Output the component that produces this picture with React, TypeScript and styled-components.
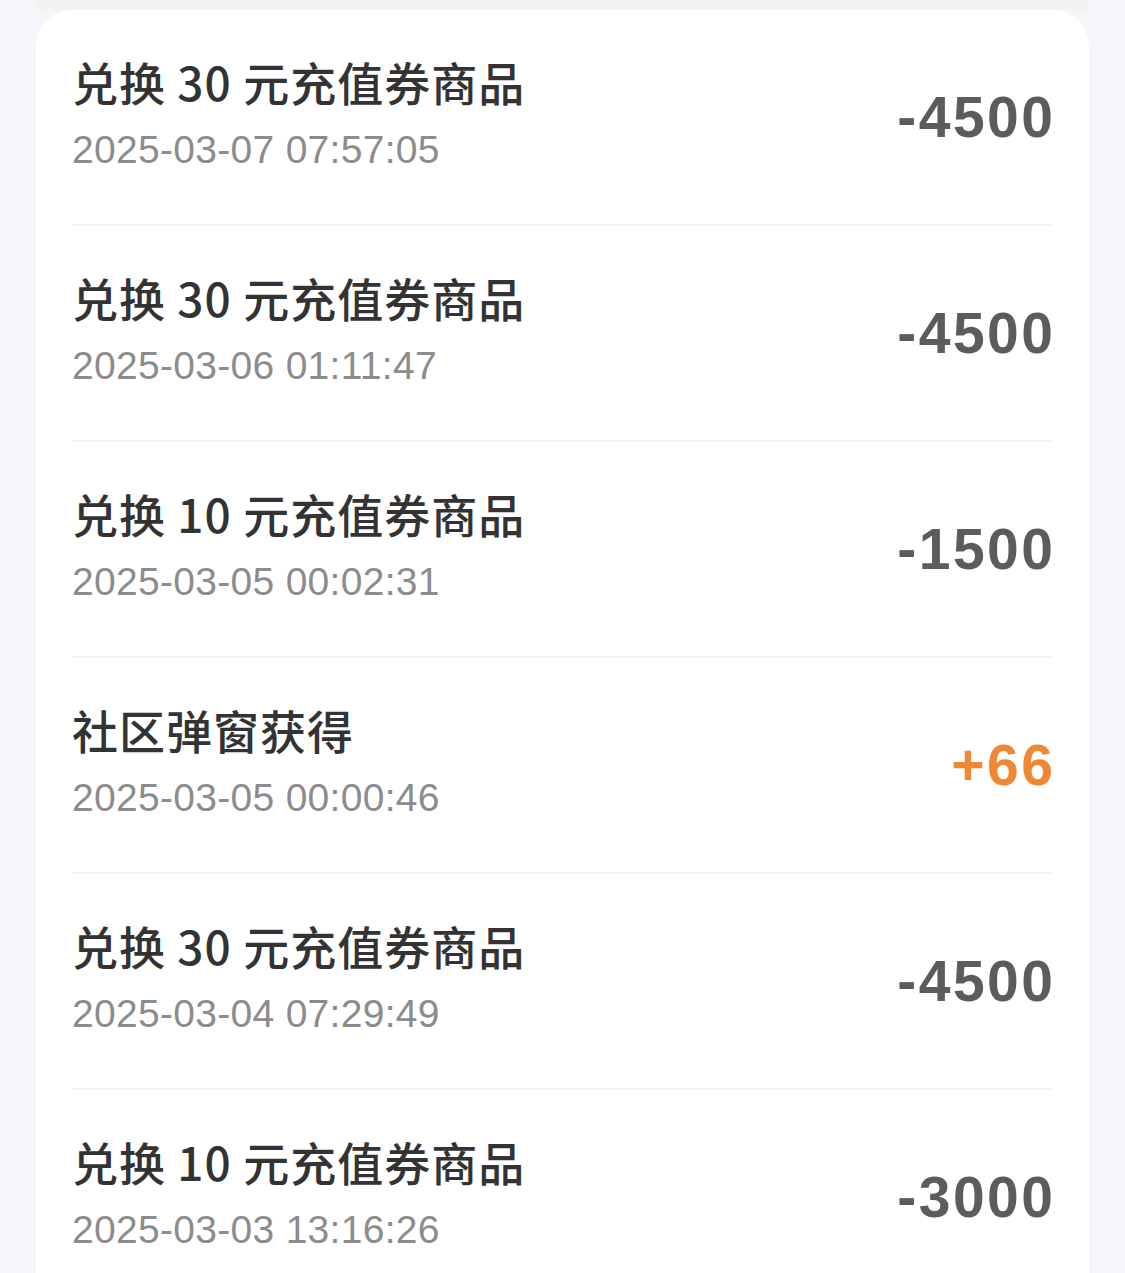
import { createGlobalStyle, styled } from 'styled-components';

type Record = {
  title: string;
  time: string;
  amount: number;
};

const records: Record[] = [
  { title: '兑换 30 元充值券商品', time: '2025-03-07 07:57:05', amount: -4500 },
  { title: '兑换 30 元充值券商品', time: '2025-03-06 01:11:47', amount: -4500 },
  { title: '兑换 10 元充值券商品', time: '2025-03-05 00:02:31', amount: -1500 },
  { title: '社区弹窗获得', time: '2025-03-05 00:00:46', amount: 66 },
  { title: '兑换 30 元充值券商品', time: '2025-03-04 07:29:49', amount: -4500 },
  { title: '兑换 10 元充值券商品', time: '2025-03-03 13:16:26', amount: -3000 },
];

function App() {
  return (
    <>
      <GlobalStyle />
      <Page>
        <Column>
          <Card>
            {records.map((record, idx) => (
              <Row key={record.time + idx} $last={idx === records.length - 1}>
                <Info>
                  <Title>{record.title}</Title>
                  <Time>{record.time}</Time>
                </Info>
                <Amount $income={record.amount > 0}>
                  {record.amount > 0 ? `+${record.amount}` : record.amount}
                </Amount>
              </Row>
            ))}
          </Card>
        </Column>
      </Page>
    </>
  );
}

const GlobalStyle = createGlobalStyle`
  html, body {
    margin: 0;
    padding: 0;
    background: #f5f6fa;
  }
`;

const Page = styled.div`
  width: 1125px;
  height: 1273px;
  overflow: hidden;
  background: #f5f6fa;
  padding: 0 36px;
  box-sizing: border-box;
`;

const Column = styled.div`
  padding-top: 10px;
  background: linear-gradient(#f2f2f2 0 10px, transparent 10px);
`;

const Card = styled.div`
  background: #ffffff;
  border-radius: 36px 36px 0 0;
  padding: 0 36px;
`;

const Row = styled.div<{ $last: boolean }>`
  height: 214px;
  display: flex;
  align-items: center;
  justify-content: space-between;
  border-bottom: ${(p) => (p.$last ? 'none' : '2px solid #f2f2f2')};
`;

const Info = styled.div`
  display: flex;
  flex-direction: column;
  gap: 22px;
  margin-top: -6px;
`;

const Title = styled.div`
  font-family: 'Noto Sans CJK SC', 'Noto Sans', sans-serif;
  font-size: 46px;
  font-weight: 500;
  line-height: 50px;
  letter-spacing: 1px;
  color: #333333;
`;

const Time = styled.div`
  font-family: 'Liberation Sans', Arial, sans-serif;
  font-size: 39px;
  line-height: 44px;
  letter-spacing: 0.3px;
  color: #8c8c8c;
`;

const Amount = styled.div<{ $income: boolean }>`
  font-family: 'Liberation Sans', Arial, sans-serif;
  font-weight: 700;
  font-size: 57px;
  letter-spacing: 2.5px;
  margin-right: -2.5px;
  color: ${(p) => (p.$income ? '#ef8833' : '#5c5c5c')};
`;

export default App;
